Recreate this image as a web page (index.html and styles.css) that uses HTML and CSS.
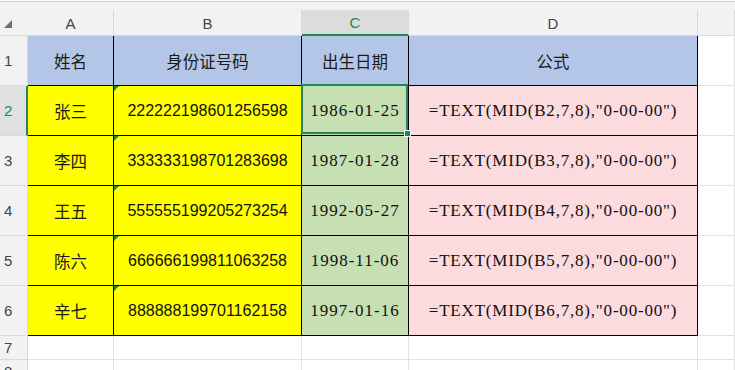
FILE: index.html
```html
<!DOCTYPE html>
<html lang="zh">
<head>
<meta charset="utf-8">
<title>身份证号码提取出生日期</title>
<link rel="stylesheet" href="styles.css">
</head>
<body>
<div class="top"></div>
<div class="band"></div>
<div class="sheet">
  <div class="corner"><span class="tri"></span></div>
  <div class="ch">A</div>
  <div class="ch">B</div>
  <div class="ch active">C</div>
  <div class="ch">D</div>
  <div class="ch"></div>

  <div class="rh">1</div>
  <div class="cell head cn">姓名</div>
  <div class="cell head cn">身份证号码</div>
  <div class="cell head cn">出生日期</div>
  <div class="cell head cn">公式</div>
  <div class="cell empty"></div>

  <div class="rh active">2</div>
  <div class="cell name cn">张三</div>
  <div class="cell id flag">222222198601256598</div>
  <div class="cell date selected">1986-01-25</div>
  <div class="cell formula">=TEXT(MID(B2,7,8),"0-00-00")</div>
  <div class="cell empty"></div>

  <div class="rh">3</div>
  <div class="cell name cn">李四</div>
  <div class="cell id flag">333333198701283698</div>
  <div class="cell date">1987-01-28</div>
  <div class="cell formula">=TEXT(MID(B3,7,8),"0-00-00")</div>
  <div class="cell empty"></div>

  <div class="rh">4</div>
  <div class="cell name cn">王五</div>
  <div class="cell id flag">555555199205273254</div>
  <div class="cell date">1992-05-27</div>
  <div class="cell formula">=TEXT(MID(B4,7,8),"0-00-00")</div>
  <div class="cell empty"></div>

  <div class="rh">5</div>
  <div class="cell name cn">陈六</div>
  <div class="cell id flag">666666199811063258</div>
  <div class="cell date">1998-11-06</div>
  <div class="cell formula">=TEXT(MID(B5,7,8),"0-00-00")</div>
  <div class="cell empty"></div>

  <div class="rh">6</div>
  <div class="cell name cn">辛七</div>
  <div class="cell id flag">888888199701162158</div>
  <div class="cell date">1997-01-16</div>
  <div class="cell formula">=TEXT(MID(B6,7,8),"0-00-00")</div>
  <div class="cell empty"></div>

  <div class="rh short">7</div>
  <div class="cell empty"></div>
  <div class="cell empty"></div>
  <div class="cell empty"></div>
  <div class="cell empty"></div>
  <div class="cell empty"></div>

  <div class="rh short">8</div>
  <div class="cell empty"></div>
  <div class="cell empty"></div>
  <div class="cell empty"></div>
  <div class="cell empty"></div>
  <div class="cell empty"></div>
</div>
</body>
</html>
```
FILE: styles.css
```css
html, body {
  margin: 0;
  padding: 0;
  background: #ffffff;
  overflow: hidden;
}

body {
  width: 735px;
  height: 370px;
  font-family: "Liberation Sans", Arial, sans-serif;
  color: #000;
}

.top {
  height: 1px;
  background: #ffffff;
  border-bottom: 1px solid #cfcfcf;
}

.band {
  height: 8px;
  background: #f2f2f2;
}

.sheet {
  display: grid;
  grid-template-columns: 28px 86px 188px 107px 289px 37px;
  grid-template-rows: 26px repeat(6, 50px) 24px 24px;
}

.sheet > div {
  box-sizing: border-box;
}

.corner {
  background: #f2f2f2;
  border-bottom: 1px solid #d9d9d9;
  position: relative;
}

.tri {
  position: absolute;
  left: 4px;
  top: 10px;
  width: 0;
  height: 0;
  border-style: solid;
  border-width: 0 0 8px 8px;
  border-color: transparent transparent #6e6e6e transparent;
}

.ch {
  background: #f2f2f2;
  border-right: 1px solid #dadada;
  border-bottom: 1px solid #d9d9d9;
  display: flex;
  align-items: center;
  justify-content: center;
  font-size: 15px;
  color: #444;
  padding-top: 1px;
}

.ch.active {
  background: #dcdcdc;
  color: #21875a;
  border-bottom: 2px solid #21875a;
}

.rh {
  background: #f2f2f2;
  border-right: 1px solid #d9d9d9;
  border-bottom: 1px solid #dadada;
  display: flex;
  align-items: center;
  padding-left: 4px;
  font-size: 15px;
  color: #444;
}

.rh.active {
  background: #e0e0e0;
  color: #21875a;
  border-right: 2px solid #21875a;
}

.cell {
  display: flex;
  align-items: center;
  justify-content: center;
  border-right: 1px solid #000;
  border-bottom: 1px solid #000;
  white-space: nowrap;
  font-family: "Liberation Serif", "Noto Sans CJK SC", serif;
  font-size: 17px;
  color: #111;
  position: relative;
}

.cn {
  font-family: "Noto Sans CJK SC", sans-serif;
  font-size: 16.5px;
  color: #1a1a1a;
}

.head {
  background: #b4c6e7;
}

.name {
  background: #ffff00;
}

.id {
  background: #ffff00;
  font-family: "Liberation Sans", Arial, sans-serif;
  font-size: 16px;
}

.date {
  background: #c6e0b4;
  letter-spacing: 1px;
}

.formula {
  background: #fbdbde;
  letter-spacing: 0.8px;
}

.empty {
  background: #ffffff;
  border-right: 1px solid #e1e1e1;
  border-bottom: 1px solid #e1e1e1;
}

.flag::before {
  content: "";
  position: absolute;
  left: 0;
  top: 0;
  width: 0;
  height: 0;
  border-style: solid;
  border-width: 5px 5px 0 0;
  border-color: #1f8a4c transparent transparent transparent;
}

.selected::after {
  content: "";
  position: absolute;
  left: -1px;
  top: -2px;
  right: 0;
  bottom: 1px;
  border: 2px solid #21875a;
  pointer-events: none;
}

.selected::before {
  content: "";
  position: absolute;
  right: -3px;
  bottom: -2px;
  width: 5px;
  height: 5px;
  background: #21875a;
  border: 1px solid #ffffff;
  z-index: 2;
}
```
